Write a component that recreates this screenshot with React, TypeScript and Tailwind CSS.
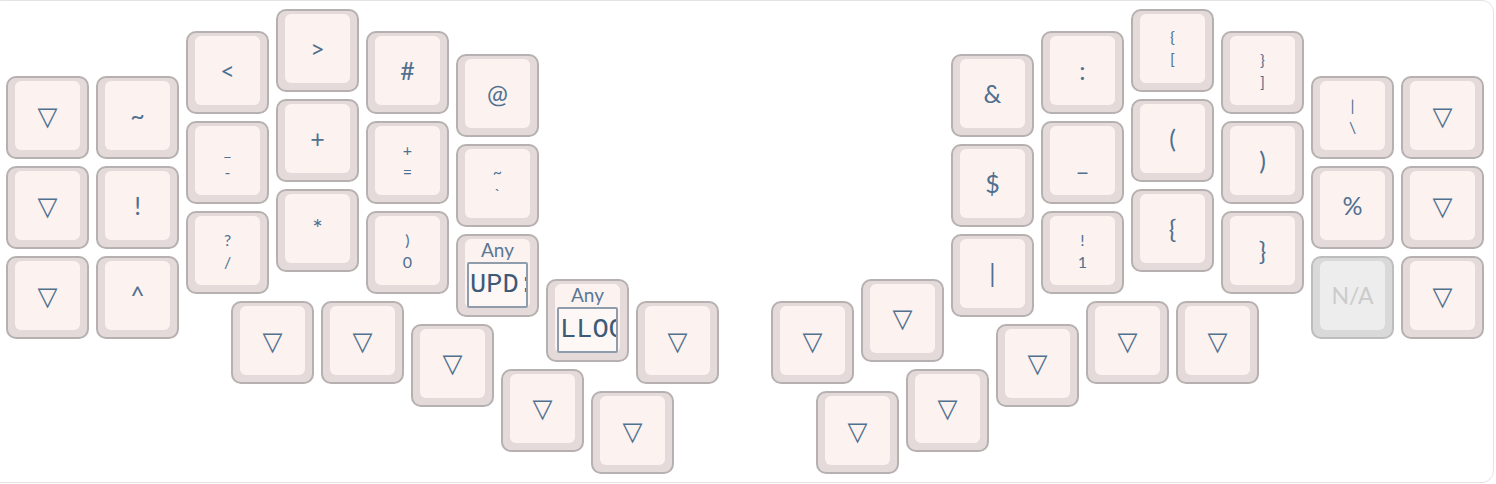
import React from "react";

type K = { x: number; y: number; t?: string; b?: string; any?: string; na?: boolean };

const T = "▽";

const keys: K[] = [
  // left hand
  { x: 0, y: 0.75, t: T }, { x: 0, y: 1.75, t: T }, { x: 0, y: 2.75, t: T },
  { x: 1, y: 0.75, t: "~" }, { x: 1, y: 1.75, t: "!" }, { x: 1, y: 2.75, t: "^" },
  { x: 2, y: 0.25, t: "<" }, { x: 2, y: 1.25, t: "_", b: "-" }, { x: 2, y: 2.25, t: "?", b: "/" },
  { x: 3, y: 0, t: ">" }, { x: 3, y: 1, t: "+" }, { x: 3, y: 2, t: "*" },
  { x: 4, y: 0.25, t: "#" }, { x: 4, y: 1.25, t: "+", b: "=" }, { x: 4, y: 2.25, t: ")", b: "0" },
  { x: 5, y: 0.5, t: "@" }, { x: 5, y: 1.5, t: "~", b: "`" }, { x: 5, y: 2.5, any: "UPD:" },
  { x: 2.5, y: 3.25, t: T }, { x: 3.5, y: 3.25, t: T }, { x: 4.5, y: 3.5, t: T },
  { x: 5.5, y: 4, t: T }, { x: 6, y: 3, any: "LLOCK" }, { x: 6.5, y: 4.25, t: T }, { x: 7, y: 3.25, t: T },
  // right hand
  { x: 8.5, y: 3.25, t: T }, { x: 9, y: 4.25, t: T }, { x: 9.5, y: 3, t: T }, { x: 10, y: 4, t: T },
  { x: 11, y: 3.5, t: T }, { x: 12, y: 3.25, t: T }, { x: 13, y: 3.25, t: T },
  { x: 10.5, y: 0.5, t: "&" }, { x: 10.5, y: 1.5, t: "$" }, { x: 10.5, y: 2.5, t: "|" },
  { x: 11.5, y: 0.25, t: ":" }, { x: 11.5, y: 1.25, t: "_" }, { x: 11.5, y: 2.25, t: "!", b: "1" },
  { x: 12.5, y: 0, t: "{", b: "[" }, { x: 12.5, y: 1, t: "(" }, { x: 12.5, y: 2, t: "{" },
  { x: 13.5, y: 0.25, t: "}", b: "]" }, { x: 13.5, y: 1.25, t: ")" }, { x: 13.5, y: 2.25, t: "}" },
  { x: 14.5, y: 0.75, t: "|", b: "\\" }, { x: 14.5, y: 1.75, t: "%" }, { x: 14.5, y: 2.75, na: true },
  { x: 15.5, y: 0.75, t: T }, { x: 15.5, y: 1.75, t: T }, { x: 15.5, y: 2.75, t: T },
];

const U = 90;

function Key({ k }: { k: K }) {
  const na = !!k.na;
  return (
    <div
      className={
        "absolute w-[83px] h-[83px] rounded-[10px] border-2 " +
        (na ? "border-[#bdbdbd] bg-[#d9d9d9]" : "border-[#b6b1b0] bg-[#e3dad9]")
      }
      style={{ left: k.x * U, top: k.y * U }}
    >
      <div
        className={
          "absolute left-[7px] right-[7px] top-[3px] bottom-[7px] rounded-[6px] flex flex-col items-center justify-center text-[#50708f] " +
          (na ? "bg-[#ededed]" : "bg-[#fcf3f1]")
        }
        style={{ fontFamily: "Lato, 'Noto Sans', sans-serif" }}
      >
        {na ? (
          <span className="text-[23px] text-[#cbcbcb]">N/A</span>
        ) : k.any ? (
          <div className="flex flex-col items-center w-full h-full pt-[1px]">
            <span className="text-[19px] leading-[20px] text-[#5a7896]">Any</span>
            <div className="mt-[2px] w-[61px] h-[47px] border-2 border-[#8e9cab] rounded-[2px] overflow-hidden flex items-center bg-[#fdf7f5]">
              <span
                className="pl-[1px] pt-[2px] text-[27px] leading-none text-[#3e5a77] whitespace-nowrap"
                style={{ fontFamily: "'Liberation Mono', 'DejaVu Sans Mono', monospace" }}
              >
                {k.any}
              </span>
            </div>
          </div>
        ) : k.b !== undefined ? (
          <>
            <span className="text-[16px] leading-[22px]">{k.t}</span>
            <span className="text-[16px] leading-[22px]">{k.b}</span>
          </>
        ) : k.t === T ? (
          <span className="text-[26px] leading-none" style={{ fontFamily: "'DejaVu Sans', sans-serif" }}>
            {T}
          </span>
        ) : (
          <span className="text-[25px] leading-none">{k.t}</span>
        )}
      </div>
    </div>
  );
}

export default function App() {
  return (
    <div className="w-[1496px] h-[484px] bg-white overflow-hidden">
      <div className="ml-[-10px] w-[1504px] h-[483px] border border-[#e3e3e3] rounded-[12px] bg-white">
        <div className="relative ml-[15px] mt-[7.5px] w-[1480px] h-[466px]">
          {keys.map((k, i) => (
            <Key key={i} k={k} />
          ))}
        </div>
      </div>
    </div>
  );
}
